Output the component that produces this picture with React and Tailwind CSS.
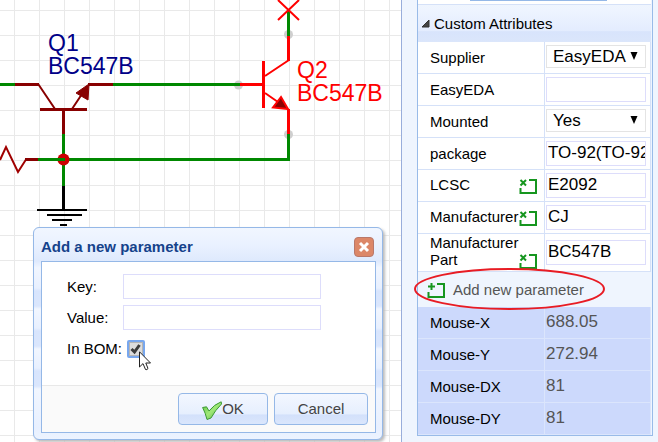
import React from "react";

function Schematic() {
  return (
    <svg className="absolute inset-0 h-full w-full" aria-label="Schematic" fill="none">
      <defs>
        <pattern id="grid" x="14" y="10" width="25" height="25" patternUnits="userSpaceOnUse">
          <path d="M0 0H25V1H1V25H0Z" fill="#e9e9e9" />
        </pattern>
      </defs>
      <rect width="100%" height="100%" fill="url(#grid)" />

      {/* connection points */}
      <g fill="#cfcfcf">
        <circle cx="238.5" cy="85" r="4.5" />
        <circle cx="288.5" cy="34.5" r="4.5" />
        <circle cx="288.5" cy="134.5" r="4.5" />
      </g>

      {/* wires */}
      <g stroke="#008800" strokeWidth="3">
        <path d="M0 84.5H15M113 84.5H240M288.5 10V36M288.5 134V161M63 159.5H290M63.5 133V186" />
      </g>
      <circle cx="63.5" cy="159.5" r="6" fill="#cc0000" />
      <path d="M38 159.5H65" stroke="#008800" strokeWidth="3" />

      {/* resistor */}
      <path d="M0 160L6 147L18 172L26 159.5" stroke="#a00000" strokeWidth="2" />
      <path d="M25 159.5H38" stroke="#880000" strokeWidth="3" />

      {/* Q1 */}
      <g stroke="#880000">
        <path d="M15 84.5H39M88 84.5H113M40 109.5H87M63.5 110V134" strokeWidth="3" />
        <path d="M38.5 84.5L55 109M72 109L86 88" strokeWidth="2" />
        <path d="M89 84L76 93L88 100Z" fill="#880000" />
      </g>

      {/* ground */}
      <path d="M63.5 186V210" stroke="#000" strokeWidth="3" />
      <path d="M37 210H87M47 215H82M52 220H72M60 225H67" stroke="#000" strokeWidth="2" />

      {/* Q2 */}
      <g stroke="#ff0000">
        <path d="M240 84.5H263M263.5 61V108M288.5 36V61M288.5 109V134" strokeWidth="3" />
        <path d="M265 76L289 60M265 93L288 109M278 0L299 20M299 0L278 20" strokeWidth="2" />
        <path d="M281 97L273 107.5L288 109Z" fill="#880000" strokeWidth="2" />
      </g>

      <g className="font-['Liberation_Sans',Arial,sans-serif] text-[23px]">
        <text fill="#000088">
          <tspan x="48" y="51">Q1</tspan>
          <tspan x="48" y="74">BC547B</tspan>
        </text>
        <text fill="#ff0000">
          <tspan x="297" y="78">Q2</tspan>
          <tspan x="297" y="101">BC547B</tspan>
        </text>
      </g>
    </svg>
  );
}

const fieldBorder = "border border-[#ddddfb] bg-white outline-none";
const dialogButton =
  "flex h-8 items-center justify-center rounded-[4px] border border-[#95b8e7] bg-[linear-gradient(#f3f7ff_0%,#e6effe_66%,#d3e1fb_70%,#dae6fc_100%)] text-[#444]";

function ParameterDialog() {
  return (
    <section
      role="dialog"
      aria-labelledby="dialog-title"
      className="absolute left-[33px] top-[227px] w-[350px] rounded-[6px] border border-[#95b8e7] bg-[#dfe9fd] bg-[linear-gradient(#f1f6ff_0px,#e9f1ff_18px,#dee9fd_33px,#f1f6ff_40px,#e8f0ff_60px,#d8e5fd_63px,#dae6fd_78px,#f1f6ff_81px,#e8f0ff_100px,#d8e5fd_103px,#dae6fd_118px,#f1f6ff_121px,#e8f0ff_140px,#d8e5fd_143px,#dae6fd_158px,#f1f6ff_161px,#e8f0ff_200px,#edf4ff_212px)] pb-[6px] pl-[7px] pr-[6px] shadow-[2px_2px_3px_#bbb]"
    >
      <header className="flex h-[33px] items-center justify-between pr-[2px] pt-[4px]">
        <h2 id="dialog-title" className="font-bold text-[#15428b]">
          Add a new parameter
        </h2>
        <button
          type="button"
          aria-label="Close"
          className="flex size-5 items-center justify-center rounded-[4px] border border-[#b9786a] bg-[#dc8768]"
        >
          <svg viewBox="0 0 12 12" className="size-3">
            <path d="M2 2L10 10M10 2L2 10" stroke="#fff" strokeWidth="3" />
          </svg>
        </button>
      </header>
      <form className="border border-[#95b8e7] bg-white" onSubmit={(e) => e.preventDefault()}>
        <div className="flex h-[123px] flex-col gap-[6px] pl-[25px] pt-[12px]">
          <div className="flex items-center">
            <label htmlFor="key" className="w-14">Key:</label>
            <input id="key" className={`h-[25px] w-[198px] px-1 ${fieldBorder}`} />
          </div>
          <div className="flex items-center">
            <label htmlFor="value" className="w-14">Value:</label>
            <input id="value" className={`h-[25px] w-[198px] px-1 ${fieldBorder}`} />
          </div>
          <div className="flex h-[25px] items-center">
            <label htmlFor="bom" className="w-[60px]">In BOM:</label>
            <span className="relative size-[18px]">
              <input
                id="bom"
                type="checkbox"
                defaultChecked
                className="peer block size-[18px] appearance-none rounded-[2px] border-2 border-[#78a7ee] bg-[#dcdcdc] shadow-[inset_0_0_0_1px_#b4b4b4]"
              />
              <svg viewBox="0 0 18 18" className="pointer-events-none absolute inset-0 hidden peer-checked:block">
                <path d="M4.500 9L7.500 12L12.500 5" fill="none" stroke="#3c3c3c" strokeWidth="3" />
              </svg>
              <svg viewBox="0 0 12 20" className="pointer-events-none absolute left-[12px] top-[11px] h-5 w-3">
                <path
                  d="M.5 .8V16L4 12.600L6.500 18.500Q8 19.200 9 17.500L6.800 12H11.500Z"
                  fill="#fff"
                  stroke="#222"
                />
              </svg>
            </span>
          </div>
        </div>
        <footer className="flex justify-end gap-[6px] border-t border-[#e8e8e8] bg-[#fafafa] p-[7px]">
          <button type="submit" className={`${dialogButton} w-[90px]`}>
            <svg viewBox="0 0 20 20" className="mt-1 size-5">
              <defs>
                <linearGradient id="tick" x1="0" y1="0" x2="1" y2="1">
                  <stop offset="0" stopColor="#5cc443" />
                  <stop offset="0.5" stopColor="#a0e878" />
                  <stop offset="1" stopColor="#4cae3c" />
                </linearGradient>
              </defs>
              <path
                d="M.6 6.500L4.500 5.800L7 10Q12 3.500 19.200 .8L19.500 3Q13 9.500 9 17L5 18.500Q3.500 12 .6 6.500Z"
                fill="url(#tick)"
                stroke="#3d9a35"
              />
            </svg>
            OK
          </button>
          <button type="button" className={`${dialogButton} w-[94px]`}>
            Cancel
          </button>
        </footer>
      </form>
    </section>
  );
}

function BoxIcon({ plus }) {
  return (
    <svg viewBox="0 0 18 16" className="h-4 w-[18px] shrink-0" fill="none" stroke="#16961f" strokeWidth="2">
      <path d="M10 2H17V15H1.500V10" />
      {plus ? <path d="M4.500 1V8M1 4.500H8" /> : <path d="M1.500 2L7 7.500M7 2L1.500 7.500" />}
    </svg>
  );
}

const attributes = [
  { name: "Supplier", value: "EasyEDA", select: true },
  { name: "EasyEDA", value: "" },
  { name: "Mounted", value: "Yes", select: true },
  { name: "package", value: "TO-92(TO-92)" },
  { name: "LCSC", value: "E2092", removable: true },
  { name: "Manufacturer", value: "CJ", removable: true },
  { name: "Manufacturer Part", value: "BC547B", removable: true, tall: true },
];

const readings = [
  ["Mouse-X", "688.05"],
  ["Mouse-Y", "272.94"],
  ["Mouse-DX", "81"],
  ["Mouse-DY", "81"],
];

function AttributeRow({ name, value, select, removable, tall }) {
  const id = `attr-${name.replace(" ", "-")}`;
  return (
    <tr className={`bg-white ${tall ? "h-[38px]" : "h-8"}`}>
      <th scope="row" className="border-b border-r border-[#d5e1f8] p-0 pl-3 text-left font-normal">
        <div className={`flex items-end justify-between pr-[7px] ${removable ? "pb-[3px]" : ""}`}>
          <label htmlFor={id} className="w-[89px] leading-[17px]">
            {name}
          </label>
          {removable && (
            <button type="button" aria-label={`Remove ${name}`} className="-mb-px -ml-1">
              <BoxIcon />
            </button>
          )}
        </div>
      </th>
      <td className="border-b border-r border-[#d5e1f8] p-0 pl-px pr-[4px]">
        {select ? (
          <div className="relative mb-[2px]">
            <select
              id={id}
              defaultValue={value}
              className="block h-[23px] w-full appearance-none border border-[#e4e4e4] bg-white pl-[6px] text-[17px] leading-5 outline-none"
            >
              <option>{value}</option>
            </select>
            <svg viewBox="0 0 8 8" className="pointer-events-none absolute right-2 top-[7px] size-2">
              <path d="M.5 0H7.500L4 8Z" />
            </svg>
          </div>
        ) : (
          <input
            id={id}
            defaultValue={value}
            className={`block h-[25px] w-full pb-[2px] pl-px text-[17px] ${fieldBorder}`}
          />
        )}
      </td>
    </tr>
  );
}

function AttributesPanel() {
  return (
    <aside className="relative w-[257px] shrink-0 border-l border-[#99aedb] bg-[#eff5fe] pl-[15px] pr-[5px]">
      <div className="border-x border-b border-[#99bbe8] pr-px">
        <div className="h-[5px] border-b border-[#d5e1f8] bg-white">
          <div className="ml-[52px] h-px w-[137px] bg-[#95b8e7]" />
        </div>
        <h2 className="flex h-[37px] items-center gap-1 bg-[linear-gradient(#eff5fe_0%,#eef4ff_14%,#e3ecfe_70%,#d8e4fc_72%,#dbe6fb_100%)] pl-[3px]">
          <svg viewBox="0 0 9 9" className="size-[9px]">
            <path d="M8 1V8H1Z" fill="#444" stroke="#333" />
          </svg>
          Custom Attributes
        </h2>
        <table className="w-full table-fixed border-separate border-spacing-0">
          <colgroup>
            <col className="w-[127px]" />
            <col />
          </colgroup>
          <tbody>
            {attributes.map((a) => (
              <AttributeRow key={a.name} {...a} />
            ))}
            <tr className="h-[35px]">
              <td colSpan={2} className="p-0 pl-[9px]">
                <button type="button" className="flex items-center gap-2 text-[#555]">
                  <BoxIcon plus />
                  Add new parameter
                </button>
              </td>
            </tr>
            {readings.map(([name, value]) => (
              <tr key={name} className="h-8 bg-[#ccd9fc]">
                <th scope="row" className="border-b border-r border-[#dbe5fc] p-0 pl-3 text-left font-normal">
                  {name}
                </th>
                <td className="border-b border-r border-[#dbe5fc] p-0 pb-[2px] pl-px text-[17px] leading-5 text-[#555]">
                  {value}
                </td>
              </tr>
            ))}
          </tbody>
        </table>
      </div>
      {/* highlight ring over the add button */}
      <svg viewBox="0 0 193 44" className="pointer-events-none absolute left-[12px] top-[267px] h-11 w-[193px]">
        <ellipse cx="95.500" cy="22" rx="94.500" ry="20" fill="none" stroke="#e81c24" strokeWidth="2" />
      </svg>
    </aside>
  );
}

export default function App() {
  return (
    <div className="flex h-screen overflow-hidden bg-white font-['Liberation_Sans',Arial,sans-serif] text-[15px] leading-5 text-black">
      <main className="relative min-w-0 flex-1 overflow-hidden">
        <Schematic />
        <ParameterDialog />
      </main>
      <AttributesPanel />
    </div>
  );
}
